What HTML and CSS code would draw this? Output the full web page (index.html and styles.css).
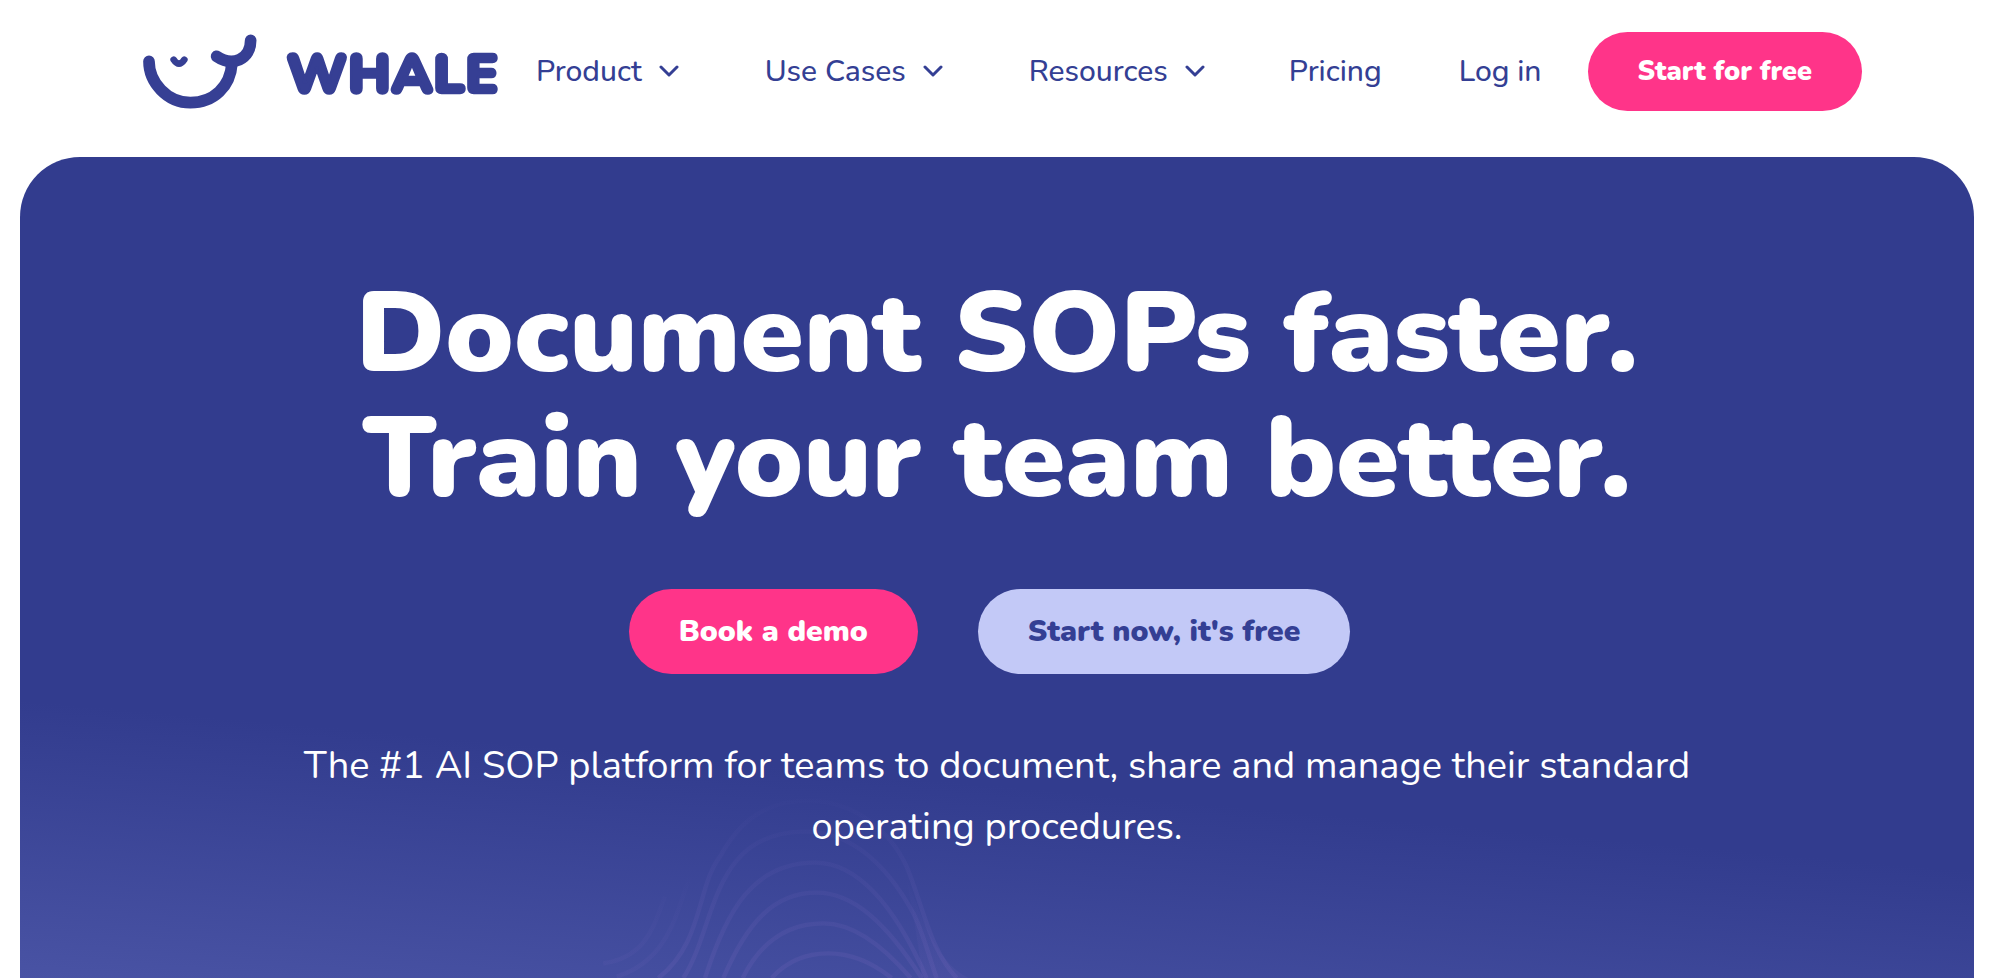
FILE: index.html
```html
<!DOCTYPE html>
<html lang="en">
<head>
    <meta charset="UTF-8">
    <meta name="viewport" content="width=device-width, initial-scale=1.0">
    <title>Whale</title>
    <link rel="stylesheet" href="styles.css">
</head>
<body>
    <header class="main_header">
        <a class="logo" href="#" aria-label="Whale">
            <svg viewBox="70 70 1071 231">
                <g class="logo_mark">
                    <path d="M88 155C88 218 142 279 212 279C282 279 332 232 337 160"/>
                    <path d="M291 140C338 172 393 150 393 92"/>
                    <path class="logo_eye" d="M162 150Q178 174 194 150"/>
                </g>
                <text class="logo_text" x="498" y="250">WHALE</text>
            </svg>
        </a>
        <nav class="gnb">
            <ul class="gnb_menu">
                <li><a href="#">Product <svg class="arrow" viewBox="0 0 20 14"><path d="M2 2L10 10L18 2"/></svg></a></li>
                <li><a href="#">Use Cases <svg class="arrow" viewBox="0 0 20 14"><path d="M2 2L10 10L18 2"/></svg></a></li>
                <li><a href="#">Resources <svg class="arrow" viewBox="0 0 20 14"><path d="M2 2L10 10L18 2"/></svg></a></li>
            </ul>
            <ul class="gnb_links">
                <li><a href="#">Pricing</a></li>
                <li><a href="#">Log in</a></li>
            </ul>
        </nav>
        <button class="btn btn_small btn_pink" type="button">Start for free</button>
    </header>
    <main class="hero">
        <!-- wave lines behind the text -->
        <svg class="hero_waves" viewBox="0 0 1500 534">
            <defs>
                <linearGradient id="wave_fade" gradientUnits="userSpaceOnUse" x1="0" y1="-40" x2="0" y2="534">
                    <stop offset="0" stop-color="#6a60b4" stop-opacity="0"/>
                    <stop offset="1" stop-color="#6a60b4" stop-opacity="0.28"/>
                </linearGradient>
                <linearGradient id="wave_fade_side" gradientUnits="userSpaceOnUse" x1="0" y1="220" x2="0" y2="534">
                    <stop offset="0" stop-color="#6a60b4" stop-opacity="0"/>
                    <stop offset="1" stop-color="#6a60b4" stop-opacity="0.16"/>
                </linearGradient>
            </defs>
            <path d="M635 534C680 484 740 460 805 460C880 460 940 490 995 534"/>
            <path d="M548 534C600 430 680 370 790 370C890 370 980 450 1052 534"/>
            <path d="M490 534C560 370 640 278 770 278C880 278 980 370 1085 534"/>
            <path d="M435 534C500 330 580 188 765 188C900 188 1010 330 1100 534"/>
            <path d="M370 534C470 380 450 95 735 95C900 95 1000 230 1060 340C1090 400 1110 480 1130 534"/>
            <path d="M295 534C430 430 410 260 480 170C540 60 620 2 745 2C880 2 990 90 1040 200C1090 320 1110 450 1190 534"/>
            <path class="side" d="M170 530C330 480 350 330 390 230"/>
            <path class="side" d="M130 490C260 470 280 380 315 290"/>
            <path class="fill" d="M1040 240C1085 340 1120 480 1225 534L1085 534C1080 450 1060 350 1040 240Z"/>
        </svg>
        <h1>Document SOPs faster.<br>Train your team better.</h1>
        <div class="hero_buttons">
            <button class="btn btn_pink" type="button">Book a demo</button>
            <button class="btn btn_light" type="button">Start now, it's free</button>
        </div>
        <p class="hero_text">The #1 AI SOP platform for teams to document, share and manage their standard operating procedures.</p>
    </main>
</body>
</html>
```
FILE: styles.css
```css
/* reset */
* {box-sizing: border-box;}
body {
    display: flex;
    flex-direction: column;
    min-height: 100vh;
    margin: 0;
    background: #ffffff;
    color: #343f94;
    font-family: 'Nunito', 'Open Sans', sans-serif;
}
ul {margin: 0; padding: 0; list-style: none;}
a {color: inherit; text-decoration: none;}

/* header */
.main_header {
    display: flex;
    align-items: center;
    padding: 32px 137px 46px 143px;
}
.logo {flex: none; width: 357px; height: 77px;}
.logo svg {display: block; width: 100%; height: 100%; overflow: visible;}
.logo_mark path {
    fill: none;
    stroke: #363f94;
    stroke-width: 35;
    stroke-linecap: round;
}
.logo_mark .logo_eye {stroke-width: 20;}
.logo_text {
    fill: #363f94;
    stroke: #363f94;
    stroke-width: 8;
    stroke-linejoin: round;
    font-size: 165px;
    font-weight: 900;
}

/* navigation */
.gnb {
    display: flex;
    flex: 1;
    justify-content: space-between;
    padding: 0 46px 0 36px;
    font-size: 30px;
    font-weight: 500;
    line-height: 40px;
    white-space: nowrap;
}
.gnb_menu {display: flex; gap: 86px;}
.gnb_links {display: flex; gap: 77px;}
.gnb a {display: flex; align-items: center; gap: 17px;}
.arrow {
    width: 20px;
    height: 14px;
    fill: none;
    stroke: #343f94;
    stroke-width: 3;
    stroke-linecap: round;
    stroke-linejoin: round;
}

/* buttons */
.btn {
    height: 85px;
    padding: 0 50px;
    border: 0;
    border-radius: 43px;
    font-family: inherit;
    font-size: 30px;
    font-weight: 900;
    white-space: nowrap;
    cursor: pointer;
}
.btn_small {height: 79px; font-size: 27px;}
.btn_pink {background: #ff3489; color: #ffffff;}
.btn_light {background: #c3c9f7; color: #343f94;}

/* hero */
.hero {
    position: relative;
    flex: 1;
    margin: 0 25px 1px 20px;
    padding: 114px 200px 0;
    overflow: hidden;
    border-radius: 60px 60px 0 0;
    background: linear-gradient(185deg, #323c8e 72%, #4953a4 100%);
    color: #ffffff;
    text-align: center;
}
.hero > * {position: relative;}
.hero h1 {
    margin: 0;
    font-size: 114px;
    font-weight: 900;
    line-height: 125px;
}
.hero_buttons {
    display: flex;
    justify-content: center;
    gap: 60px;
    margin: 68px 15px 61px 0;
}
.hero_text {
    max-width: 1420px;
    margin: 0 auto;
    font-size: 38px;
    line-height: 61px;
}
.hero .hero_waves {
    position: absolute;
    left: 540px;
    bottom: 0;
    width: 500px;
    height: 178px;
    overflow: visible;
}
.hero_waves path {
    fill: none;
    stroke: url(#wave_fade);
    stroke-width: 13;
}
.hero_waves .side {stroke: url(#wave_fade_side);}
.hero_waves .fill {fill: url(#wave_fade_side); stroke: none;}
```
